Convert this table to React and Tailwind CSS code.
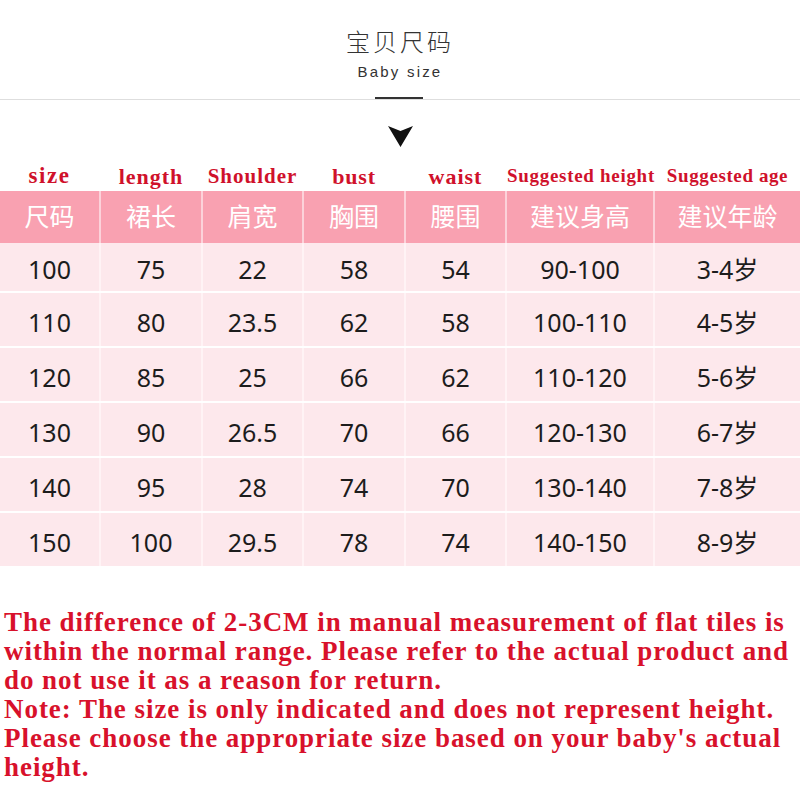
const labels = [
  { en: 'size', zh: '尺码', cls: 'text-[23px] tracking-[1.5px]' },
  { en: 'length', zh: '裙长', cls: 'text-[22px] tracking-[1px]' },
  { en: 'Shoulder', zh: '肩宽', cls: 'text-[21px] tracking-[1px]' },
  { en: 'bust', zh: '胸围', cls: 'text-[22px] tracking-[0.8px]' },
  { en: 'waist', zh: '腰围', cls: 'text-[22px] tracking-[1px]' },
  { en: 'Suggested height', zh: '建议身高', cls: 'text-[19px] tracking-[0.7px]' },
  { en: 'Suggested age', zh: '建议年龄', cls: 'text-[19px] tracking-[0.6px]' },
]

const rows = [
  ['100', '75', '22', '58', '54', '90-100', '3-4岁'],
  ['110', '80', '23.5', '62', '58', '100-110', '4-5岁'],
  ['120', '85', '25', '66', '62', '110-120', '5-6岁'],
  ['130', '90', '26.5', '70', '66', '120-130', '6-7岁'],
  ['140', '95', '28', '74', '70', '130-140', '7-8岁'],
  ['150', '100', '29.5', '78', '74', '140-150', '8-9岁'],
]

const notes = [
  'The difference of 2-3CM in manual measurement of flat tiles is',
  'within the normal range. Please refer to the actual product and',
  'do not use it as a reason for return.',
  'Note: The size is only indicated and does not represent height.',
  "Please choose the appropriate size based on your baby's actual",
  'height.',
]

const cols = 'grid grid-cols-[99px_100px_99px_100px_99px_146px_1fr] gap-x-[2px]'
const cjk = "font-['Noto_Sans','Noto_Sans_CJK_SC',sans-serif]"
const serif = "font-['Liberation_Serif',serif]"

export default function App() {
  return (
    <div className="w-[800px] h-[800px] bg-white overflow-hidden">
      {/* Title */}
      <div className="pt-[26px] flex flex-col items-center">
        <h1 className={`${cjk} text-[24px] font-light tracking-[3px] text-[#333] leading-[32px]`}>宝贝尺码</h1>
        <p className="font-['Liberation_Sans',sans-serif] text-[15px] tracking-[2.2px] text-[#333] leading-[20px] mt-[4px]">Baby size</p>
      </div>
      <div className="relative mt-[17px] h-px bg-[#dedede]">
        <div className="absolute left-[375px] top-[-2px] w-[48px] h-[2px] bg-[#333]" />
      </div>
      <div className="flex justify-center mt-[26px]">
        <svg width="25" height="21" viewBox="0 0 25 21">
          <path d="M0 0 L12.5 5 L25 0 L12.5 21 Z" fill="#111" />
        </svg>
      </div>

      {/* English labels */}
      <div className={`${cols} mt-[12px] h-[32px] items-center`}>
        {labels.map(l => (
          <div key={l.en} className={`${serif} ${l.cls} font-bold text-[#d0112b] text-center whitespace-nowrap`}>
            {l.en}
          </div>
        ))}
      </div>

      {/* Table */}
      <div className="flex flex-col gap-y-[2px] bg-white">
        <div className={`${cols} h-[52px] bg-[#fcd2da]`}>
          {labels.map(l => (
            <div key={l.zh} className={`${cjk} bg-[#f9a1b1] flex items-center justify-center text-[25px] text-white`}>
              {l.zh}
            </div>
          ))}
        </div>
        {rows.map((r, i) => (
          <div key={r[0]} className={`${cols} ${i === 0 ? 'h-[48px] -mt-[2px]' : 'h-[53px]'} bg-[#fff3f5]`}>
            {r.map((c, j) => (
              <div key={j} className={`${cjk} bg-[#fde8ec] flex items-center justify-center pt-[6px] text-[25px] text-[#1c1c1c]`}>
                {c}
              </div>
            ))}
          </div>
        ))}
      </div>

      {/* Notes */}
      <div className={`${serif} font-bold text-[#d8112b] text-[27px] tracking-[0.95px] leading-[29px] pl-[4px] mt-[42px]`}>
        {notes.map(n => (
          <p key={n} className="whitespace-nowrap">{n}</p>
        ))}
      </div>
    </div>
  )
}
